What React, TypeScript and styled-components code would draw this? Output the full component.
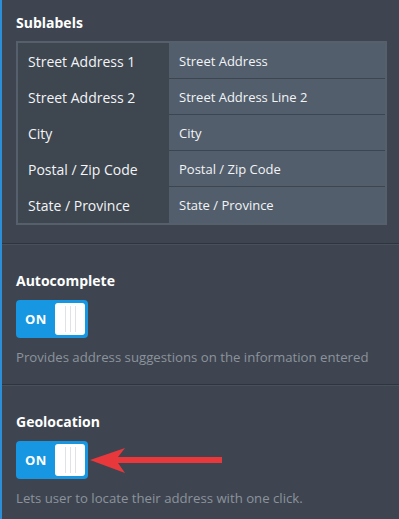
import { Fragment } from 'react';
import { createGlobalStyle, styled } from 'styled-components';

const GlobalStyle = createGlobalStyle`
  html, body {
    margin: 0;
    padding: 0;
    background: #3e4550;
  }
  * { box-sizing: border-box; }
`;

const Panel = styled.div`
  min-height: 519px;
  width: 399px;
  border-left: 2px solid #2d8ed8;
  background: #3e4550;
  font-family: 'Open Sans', 'Noto Sans', sans-serif;
  color: #ffffff;
`;

const Section = styled.div<{ $first?: boolean }>`
  padding: ${(p) => (p.$first ? '13px' : '27px')} 12px 18px 14px;
  border-bottom: 1px solid #2f353e;
  box-shadow: 0 1px 0 #48505b;
`;

const Title = styled.div`
  font-size: 14px;
  font-weight: 700;
  line-height: 20px;
`;

const Table = styled.div`
  margin-top: 8px;
  width: 371px;
  border: 2px solid #56606d;
  display: grid;
  grid-template-columns: 151px 1fr;
`;

const LabelCell = styled.div`
  height: 36px;
  padding-left: 10px;
  display: flex;
  align-items: center;
  font-size: 14px;
  color: #f2f4f6;
  background: #3e4650;
`;

const ValueCell = styled.div<{ $last?: boolean }>`
  height: 36px;
  padding-left: 10px;
  display: flex;
  align-items: center;
  font-size: 13px;
  color: #f2f4f6;
  background: #535e6c;
  border-bottom: ${(p) => (p.$last ? 'none' : '1px solid #3d4550')};
`;

const ToggleRow = styled.div`
  position: relative;
  margin-top: 9px;
  height: 38px;
`;

const Toggle = styled.div`
  width: 72px;
  height: 38px;
  border-radius: 4px;
  background: #1796e2;
  display: flex;
  align-items: center;
  justify-content: space-between;
  padding: 0 3px 0 9px;
`;

const ToggleText = styled.span`
  font-size: 13px;
  font-weight: 700;
  color: #ffffff;
  letter-spacing: 0.3px;
`;

const Knob = styled.div`
  width: 30px;
  height: 32px;
  border-radius: 3px;
  background: #ffffff;
  display: flex;
  justify-content: center;
  align-items: center;
  gap: 4px;
`;

const Grip = styled.span`
  width: 1px;
  height: 26px;
  background: #e0e2e5;
`;

const Description = styled.div`
  margin-top: 10px;
  font-size: 13.2px;
  line-height: 18px;
  color: #8c939c;
`;

const Arrow = styled.svg`
  position: absolute;
  left: 72px;
  top: 6px;
`;

const rows: [string, string][] = [
  ['Street Address 1', 'Street Address'],
  ['Street Address 2', 'Street Address Line 2'],
  ['City', 'City'],
  ['Postal / Zip Code', 'Postal / Zip Code'],
  ['State / Province', 'State / Province'],
];

const Switch = () => (
  <Toggle>
    <ToggleText>ON</ToggleText>
    <Knob>
      <Grip />
      <Grip />
      <Grip />
    </Knob>
  </Toggle>
);

const App = () => (
  <>
    <GlobalStyle />
    <Panel>
      <Section $first>
        <Title>Sublabels</Title>
        <Table>
          {rows.map(([label, value], i) => (
            <Fragment key={label}>
              <LabelCell>{label}</LabelCell>
              <ValueCell $last={i === rows.length - 1}>{value}</ValueCell>
            </Fragment>
          ))}
        </Table>
      </Section>
      <Section>
        <Title>Autocomplete</Title>
        <ToggleRow>
          <Switch />
        </ToggleRow>
        <Description>Provides address suggestions on the information entered</Description>
      </Section>
      <Section>
        <Title>Geolocation</Title>
        <ToggleRow>
          <Switch />
          <Arrow width="150" height="28" viewBox="0 0 150 28">
            <polygon points="2,13 37,1 30,10 134,10 134,16 30,16 37,26" fill="#e8383c" />
          </Arrow>
        </ToggleRow>
        <Description>Lets user to locate their address with one click.</Description>
      </Section>
    </Panel>
  </>
);

export default App;
